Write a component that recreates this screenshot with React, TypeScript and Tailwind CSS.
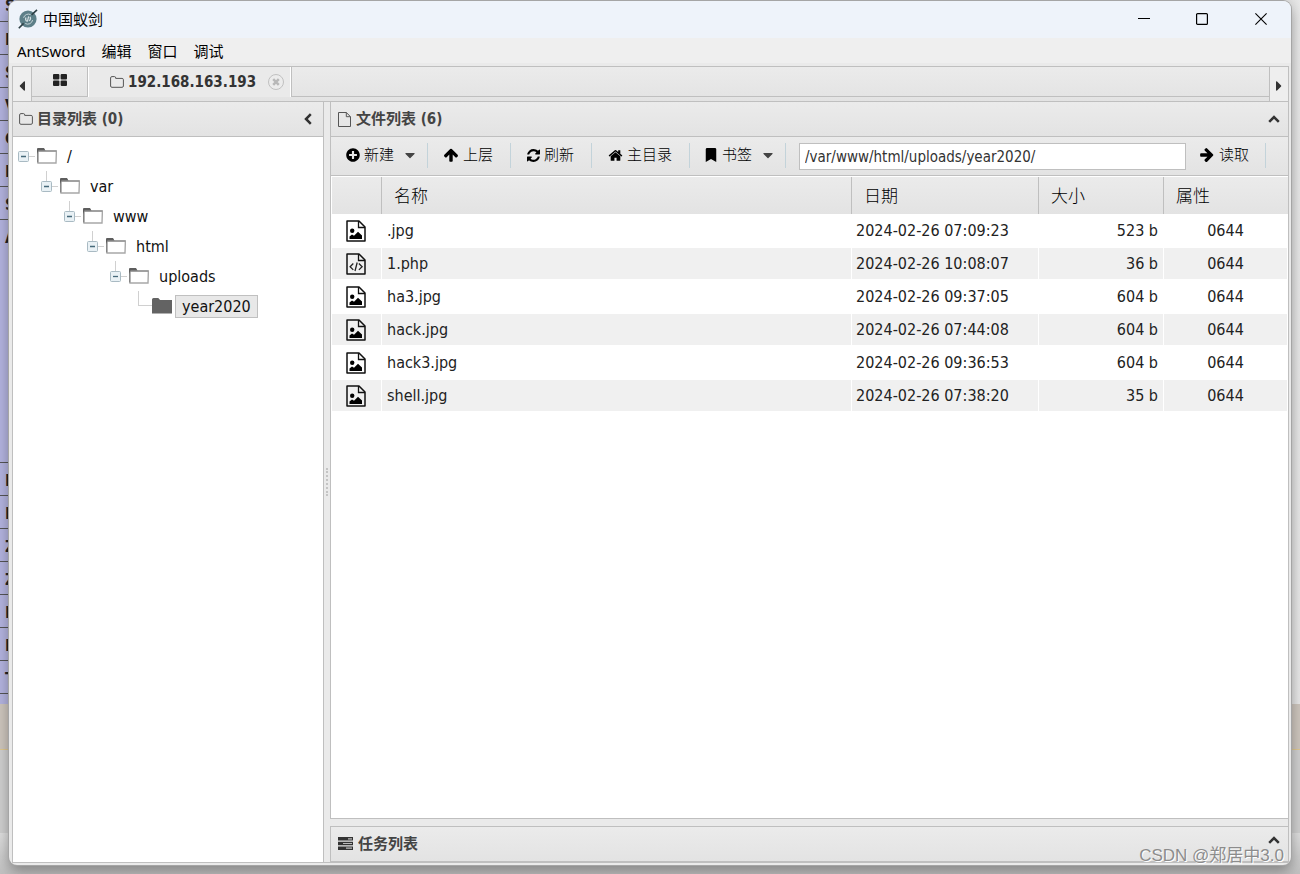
import React from "react";
import { FaPlusCircle, FaBookmark, FaCaretDown, FaCaretLeft, FaCaretRight } from "react-icons/fa";

const BAR = "bg-linear-to-b from-[#ebebeb] to-[#e3e3e3]";
const LINE = "border-[#bfbfbf]";

function Logo() {
  return (
    <svg viewBox="0 0 20 20" className="size-5" aria-hidden="true">
      <circle cx="10" cy="10" r="8.6" fill="#5d7f88" />
      <path d="M5.600 8.800A5 5 0 0 1 12.600 5.600M14.600 11A5 5 0 0 1 7.200 14.500" fill="none" stroke="#c5d3d7" strokeWidth="1" />
      <path d="M10.600 7.400L9.400 12.600M8 8.600c-.7 1.400-.4 2.800.8 3.800M12 7.900c.8 1.300.5 2.900-.8 4" fill="none" stroke="#d5e0e3" strokeWidth="1.200" />
      <path d="M19 .8L13.600 5.800M5.600 14.400L.8 19.200" stroke="#2d3f45" strokeWidth="1.600" />
    </svg>
  );
}

function ArrowIcon({ className }: { className: string }) {
  return (
    <svg viewBox="0 0 1792 1792" className={className} fill="currentColor" aria-hidden="true">
      <path d="M1675 971q0 51-37 90l-75 75q-38 38-91 38-54 0-90-38l-294-293v704q0 52-37.5 84.5t-90.5 32.5h-128q-53 0-90.5-32.5t-37.5-84.5v-704l-294 293q-36 38-90 38t-90-38l-75-75q-38-38-38-90 0-53 38-91l651-651q35-37 90-37 54 0 91 37l651 651q37 39 37 91z" />
    </svg>
  );
}

function RefreshIcon() {
  return (
    <svg viewBox="0 0 1536 1536" className="size-[13px]" fill="currentColor" aria-hidden="true">
      <path d="M1511 928q0 5-1 7-64 268-268 434.5t-478 166.500q-146 0-282.500-55t-243.500-157l-129 129q-19 19-45 19t-45-19-19-45v-448q0-26 19-45t45-19h448q26 0 45 19t19 45-19 45l-137 137q71 66 161 102t187 36q134 0 250-65t186-179q11-17 53-117 8-23 30-23h192q13 0 22.500 9.500t9.500 22.500zm25-800v448q0 26-19 45t-45 19h-448q-26 0-45-19t-19-45 19-45l138-138q-148-137-349-137-134 0-250 65t-186 179q-11 17-53 117-8 23-30 23h-199q-13 0-22.500-9.500t-9.500-22.500v-7q65-268 270-434.500t480-166.500q146 0 284 55.500t245 156.500l130-129q19-19 45-19t45 19 19 45z" />
    </svg>
  );
}

function HomeIcon() {
  return (
    <svg viewBox="0 0 1792 1792" className="size-[15px]" fill="currentColor" aria-hidden="true">
      <path d="M1472 992v480q0 26-19 45t-45 19h-384v-384h-256v384h-384q-26 0-45-19t-19-45v-480q0-1 .5-3t.5-3l575-474 575 474q1 2 1 6zm223-69l-62 74q-8 9-21 11h-3q-13 0-21-7l-692-577-692 577q-12 8-24 7-13-2-21-11l-62-74q-8-10-7-23.500t11-21.500l719-599q32-26 76-26t76 26l244 204v-195q0-14 9-23t23-9h192q14 0 23 9t9 23v408l219 182q10 8 11 21.500t-7 23.500z" />
    </svg>
  );
}

function TilesIcon() {
  return (
    <svg viewBox="0 0 14 12" className="mb-1 h-3 w-[14px]" fill="currentColor" aria-hidden="true">
      <rect width="6.4" height="5.400" rx="1" />
      <rect x="7.600" width="6.400" height="5.400" rx="1" />
      <rect y="6.600" width="6.400" height="5.400" rx="1" />
      <rect x="7.600" y="6.600" width="6.400" height="5.400" rx="1" />
    </svg>
  );
}

function FolderOutline() {
  return (
    <svg viewBox="0 0 14 12" className="h-3 w-[14px]" aria-hidden="true">
      <path d="M.6 10V1.900C.6 1.100 1.100.6 1.900.6h2.600c.8 0 1.200.5 1.200 1.300v.5h6.400c.8 0 1.300.5 1.300 1.300V10c0 .8-.5 1.300-1.300 1.300H1.900C1.100 11.300.6 10.800.6 10Z" fill="none" stroke="#555" strokeWidth="1" />
    </svg>
  );
}

function FileOutline() {
  return (
    <svg viewBox="0 0 13 15" className="h-[15px] w-[13px]" aria-hidden="true">
      <path d="M.5.5h7.800l4.200 4.200v9.800H.5ZM8.300.5v4.200h4.200" fill="none" stroke="#555" />
    </svg>
  );
}

function TreeFolder({ open }: { open: boolean }) {
  return open ? (
    <svg viewBox="0 0 20 16" className="h-4 w-5 shrink-0" aria-hidden="true">
      <path d="M1 15V3h18.400L19 15Z" fill="#fff" stroke="#a8a8a8" strokeWidth="1.400" />
      <path d="M.6 14.500V3h18.800" fill="none" stroke="#858585" strokeWidth="1.200" />
      <path d="M0 6V1Q0 0 1 0h6l1.500 2.500H1.500Z" fill="#5e5e5e" />
    </svg>
  ) : (
    <svg viewBox="0 0 20 16" className="h-4 w-5 shrink-0" aria-hidden="true">
      <path d="M0 15.500V1.500Q0 0 1.500 0h4.800l1.800 2H20v13.500Z" fill="#636363" />
    </svg>
  );
}

function Expander() {
  return (
    <svg viewBox="0 0 11 11" className="size-[11px]" aria-hidden="true">
      <rect x=".5" y=".5" width="10" height="10" rx="1" fill="#e9f1f5" stroke="#a9bac3" />
      <path d="M3 5.500h5" stroke="#46697a" strokeWidth="1.300" />
    </svg>
  );
}

function FileIcon({ kind }: { kind: "image" | "code" }) {
  return (
    <svg viewBox="0 0 20 22" className="ml-[14px] h-[22px] w-5" aria-label={kind} role="img">
      <path d="M1 1h12l6 6v14H1Z" fill="none" stroke="#111" strokeWidth="1.500" strokeLinejoin="round" />
      <path d="M12.500 1v6.500H19" fill="none" stroke="#111" strokeWidth="1.300" />
      {kind === "image" ? (
        <>
          <circle cx="6.200" cy="10.800" r="2.200" fill="#000" />
          <path d="M3.500 19v-2.500l2.500-2 2 1.300 4-4 4 3.700V19Z" fill="#000" />
        </>
      ) : (
        <path d="M7.300 10.500l-3.200 3.200 3.200 3.200M12.900 10.500l3.200 3.200-3.200 3.200M11.200 9.500l-2.200 8.500" fill="none" stroke="#222" strokeWidth="1.300" />
      )}
    </svg>
  );
}

function Chevron({ dir }: { dir: "up" | "left" }) {
  return (
    <svg viewBox="0 0 12 12" className="size-3" aria-hidden="true">
      <path d={dir === "up" ? "M1.200 8.800L6 4l4.800 4.800" : "M8.800 1.200L4 6l4.800 4.800"} fill="none" stroke="#333" strokeWidth="2.500" />
    </svg>
  );
}

function TasksIcon() {
  return (
    <svg viewBox="0 0 15 13" className="h-[13px] w-[15px]" aria-hidden="true">
      <path d="M0 0h15v3.500H0ZM0 4.700h15v3.500H0ZM0 9.400h15v3.500H0Z" fill="#333" />
      <path d="M10 1.200h4v1.200h-4ZM5 5.900h9v1.200H5ZM8 10.600h6v1.200H8Z" fill="#bbb" />
    </svg>
  );
}

const TREE = ["/", "var", "www", "html", "uploads", "year2020"];
const INDENT = ["pl-[5px]", "pl-[28px]", "pl-[51px]", "pl-[74px]", "pl-[97px]", "pl-[120px]"];

const FILES: { name: string; date: string; size: string; mode: string; kind: "image" | "code" }[] = [
  { name: ".jpg", date: "2024-02-26 07:09:23", size: "523 b", mode: "0644", kind: "image" },
  { name: "1.php", date: "2024-02-26 10:08:07", size: "36 b", mode: "0644", kind: "code" },
  { name: "ha3.jpg", date: "2024-02-26 09:37:05", size: "604 b", mode: "0644", kind: "image" },
  { name: "hack.jpg", date: "2024-02-26 07:44:08", size: "604 b", mode: "0644", kind: "image" },
  { name: "hack3.jpg", date: "2024-02-26 09:36:53", size: "604 b", mode: "0644", kind: "image" },
  { name: "shell.jpg", date: "2024-02-26 07:38:20", size: "35 b", mode: "0644", kind: "image" },
];

function Sep() {
  return <span className="h-[25px] w-px shrink-0 bg-[#c3d3da]" />;
}

function Tool({ icon, label, className, caret }: { icon: React.ReactNode; label: string; className: string; caret?: boolean }) {
  return (
    <button className={`flex shrink-0 items-center gap-1 text-[15px] leading-5 font-light text-black ${className}`}>
      {icon}
      <span>{label}</span>
      {caret && <FaCaretDown className="ml-1 size-4 text-[#444]" />}
    </button>
  );
}

function Backdrop() {
  const upper = ["I", "S", "V", "C", "I", "S"];
  const lower = ["I", "I", "Z", "Z", "I", "I", "T"];
  return (
    <div className="absolute inset-0 flex flex-col overflow-hidden bg-[#d0d0d0] text-[16px] font-bold text-[#222]" aria-hidden="true">
      <div className="flex h-[704px] shrink-0">
        <div className="flex w-[424px] flex-col bg-[#b3b3df]">
          <div className="h-[22px] shrink-0 border-b border-[#555] pl-[5px] leading-3">S</div>
          {upper.map((c, i) => (
            <div key={i} className="h-[33px] shrink-0 border-b border-[#555] pl-[5px] leading-9">{c}</div>
          ))}
          <div className="h-[243px] shrink-0 border-b border-[#555] pl-[5px] leading-9">A</div>
          {lower.map((c, i) => (
            <div key={i} className="h-[33px] shrink-0 border-b border-[#555] pl-[5px] leading-9">{c}</div>
          ))}
        </div>
        <div className="flex-1 bg-linear-to-r from-[#a6a6a6] from-90% to-[#e8e8e8]" />
      </div>
      <div className="h-[46px] shrink-0 border-b border-[#e0c890] bg-[#cdc5bd]" />
      <div className="h-[83px] shrink-0 bg-[#cfcfcf]" />
      <div className="flex-1 bg-linear-to-b from-[#dedede] to-[#c0c0c0]" />
    </div>
  );
}

export default function App() {
  return (
    <div className="relative flex h-screen min-h-[480px] flex-col overflow-hidden font-['DejaVu_Sans_Condensed','Noto_Sans','Noto_Sans_CJK_SC',sans-serif] text-[16px]">
      <Backdrop />
      <div className="relative mx-[9px] mt-px mb-[9px] flex min-h-0 flex-1 flex-col overflow-hidden rounded-lg bg-[#eaeaea] shadow-[0_0_0_1px_#a5a5a5,0_6px_14px_rgba(0,0,0,0.35)]">
        <header className="flex h-[37px] shrink-0 items-center bg-[#eef3fa] pb-[2px] pl-[9px] font-['Noto_Sans','Noto_Sans_CJK_SC',sans-serif]">
          <Logo />
          <h1 className="ml-[5px] flex-1 text-[15px] leading-5 text-black">中国蚁剑</h1>
          <div className="flex items-center">
            <button aria-label="Minimize" className="flex h-[35px] w-[58px] items-center justify-center">
              <svg viewBox="0 0 12 12" className="size-3"><path d="M0 5.500h12" stroke="#000" strokeWidth="1" /></svg>
            </button>
            <button aria-label="Maximize" className="flex h-[35px] w-[58px] items-center justify-center">
              <svg viewBox="0 0 12 12" className="size-3"><rect x=".6" y=".6" width="10.800" height="10.800" rx="1" fill="none" stroke="#000" strokeWidth="1.200" /></svg>
            </button>
            <button aria-label="Close" className="flex h-[35px] w-[60px] items-center justify-center">
              <svg viewBox="0 0 12 12" className="size-3"><path d="M.4.4l11.200 11.200M11.600.4L.4 11.600" stroke="#000" strokeWidth="1.100" /></svg>
            </button>
          </div>
        </header>

        <nav className="flex h-[25px] shrink-0 items-center gap-4 bg-[#efefef] pl-2 font-['Noto_Sans','Noto_Sans_CJK_SC',sans-serif] text-[15px] leading-5 text-black">
          <button>AntSword</button>
          <button>编辑</button>
          <button>窗口</button>
          <button>调试</button>
        </nav>

        <div className="mt-[3px] mr-[2px] mb-[2px] ml-[3px] flex min-h-0 flex-1 flex-col">
          <div className={`flex h-[35px] shrink-0 border-x border-t ${LINE} ${BAR}`}>
            <button aria-label="Scroll left" className={`flex w-[19px] shrink-0 items-center justify-center border-r bg-[#eeeeee] text-[#333] ${LINE}`}>
              <FaCaretLeft className="mt-1 size-4" />
            </button>
            <button aria-label="Home" className={`flex h-[30px] w-14 shrink-0 items-center justify-center border-r border-b text-[#222] ${LINE}`}>
              <TilesIcon />
            </button>
            <div className={`flex h-[30px] shrink-0 items-center border-x border-x-white bg-[#eaeaea] pl-[21px]`}>
              <FolderOutline />
              <span className="ml-1 text-[15px] leading-5 font-bold text-[#333]">192.168.163.193</span>
              <button aria-label="Close tab" className="mr-[6px] ml-3">
                <svg viewBox="0 0 16 16" className="size-4">
                  <circle cx="8" cy="8" r="7.500" fill="#ececec" stroke="#c0c0c0" />
                  <path d="M5.200 5.200l5.600 5.600M10.800 5.200l-5.600 5.600" stroke="#b8b8b8" strokeWidth="2.500" />
                </svg>
              </button>
            </div>
            <div className={`h-[30px] flex-1 border-b border-l ${LINE}`} />
            <button aria-label="Scroll right" className={`flex w-[19px] shrink-0 items-center justify-center border-l bg-[#eeeeee] text-[#333] ${LINE}`}>
              <FaCaretRight className="mt-1 size-4" />
            </button>
          </div>

          <main className={`flex min-h-0 flex-1 border ${LINE}`}>
            <section className={`flex w-[311px] shrink-0 flex-col border-r bg-white ${LINE}`}>
              <div className={`flex h-[35px] shrink-0 items-center border-b pr-[9px] pl-[6px] ${LINE} ${BAR}`}>
                <FolderOutline />
                <h2 className="ml-1 flex-1 text-[15px] leading-5 font-bold text-[#444]">目录列表 (0)</h2>
                <button aria-label="Collapse"><Chevron dir="left" /></button>
              </div>
              <ul className="pt-1">
                {TREE.map((name, i) => {
                  const last = i === TREE.length - 1;
                  return (
                    <li key={name} className={`flex h-[30px] items-center ${INDENT[i]}`}>
                      {last ? (
                        <span className="mb-[15px] ml-[5px] h-[15px] w-[14px] border-b border-l border-[#d0d0d0]" />
                      ) : (
                        <button aria-label={`Collapse ${name}`} className="relative flex h-[30px] w-[19px] shrink-0 items-center">
                          {i > 0 && <span className="absolute top-0 left-[5px] h-[10px] w-px bg-[#d0d0d0]" />}
                          <Expander />
                          <span className="h-px w-[6px] bg-[#d0d0d0]" />
                        </button>
                      )}
                      <TreeFolder open={!last} />
                      <span
                        className={
                          last
                            ? "ml-[3px] border border-[#c0c0c0] bg-[#e8e8e8] px-[6px] leading-[21px] text-[#111]"
                            : "ml-[10px] leading-[21px] text-[#111]"
                        }
                      >
                        {name}
                      </span>
                    </li>
                  );
                })}
              </ul>
            </section>

            <div className="flex w-[6px] shrink-0 cursor-col-resize items-center justify-center">
              <span className="h-7 border-l-2 border-dotted border-[#c4c4c4]" />
            </div>

            <div className="flex min-w-0 flex-1 flex-col">
              <section className={`flex min-h-0 flex-1 flex-col border-b border-l bg-white ${LINE}`}>
                <div className={`flex h-[35px] shrink-0 items-center border-b pr-2 pl-[7px] ${LINE} ${BAR}`}>
                  <FileOutline />
                  <h2 className="ml-[5px] flex-1 text-[15px] leading-5 font-bold text-[#444]">文件列表 (6)</h2>
                  <button aria-label="Collapse"><Chevron dir="up" /></button>
                </div>
                <div className={`flex h-[39px] shrink-0 items-center border-b pb-[2px] pl-[15px] ${LINE} ${BAR}`}>
                  <Tool icon={<FaPlusCircle className="size-[14px]" />} label="新建" className="w-[81px]" caret />
                  <Sep />
                  <Tool icon={<ArrowIcon className="size-4" />} label="上层" className="w-[82px] pl-[15px]" />
                  <Sep />
                  <Tool icon={<RefreshIcon />} label="刷新" className="w-20 pl-4" />
                  <Sep />
                  <Tool icon={<HomeIcon />} label="主目录" className="w-[97px] pl-4" />
                  <Sep />
                  <Tool icon={<FaBookmark className="size-[14px]" />} label="书签" className="w-[95px] pl-[14px]" caret />
                  <Sep />
                  <input
                    aria-label="Path"
                    defaultValue="/var/www/html/uploads/year2020/"
                    className={`mt-[3px] ml-[13px] h-[27px] min-w-0 flex-1 border bg-white px-[5px] text-[15px] text-[#333] outline-none ${LINE}`}
                  />
                  <Tool icon={<ArrowIcon className="size-4 rotate-90" />} label="读取" className="ml-[13px] w-[66px]" />
                  <Sep />
                  <span className="w-[22px] shrink-0" />
                </div>
                <div className="flex-1 overflow-auto pt-px pl-px">
                  <table className="w-full table-fixed border-separate border-spacing-0 text-[#222]">
                    <colgroup>
                      <col className="w-[50px]" />
                      <col />
                      <col className="w-[187px]" />
                      <col className="w-[125px]" />
                      <col className="w-[124px]" />
                    </colgroup>
                    <thead>
                      <tr className={`h-[37px] text-left text-[17px] leading-6 text-black ${BAR}`}>
                        <th aria-label="Type" className={`border-r font-light ${LINE}`} />
                        <th className={`border-r p-0 pl-3 font-light ${LINE}`}>名称</th>
                        <th className={`border-r p-0 pl-3 font-light ${LINE}`}>日期</th>
                        <th className={`border-r p-0 pl-3 font-light ${LINE}`}>大小</th>
                        <th className="p-0 pl-3 font-light">属性</th>
                      </tr>
                    </thead>
                    <tbody>
                      {FILES.map((f) => (
                        <tr key={f.name} className="h-[33px] leading-6 even:bg-[#f0f0f0] [&>td]:border-y [&>td]:border-r [&>td]:border-white [&>td]:p-0 [&>td]:pt-px">
                          <td><FileIcon kind={f.kind} /></td>
                          <td className="pl-[5px]!">{f.name}</td>
                          <td className="pl-1!">{f.date}</td>
                          <td className="pr-[5px]! text-right">{f.size}</td>
                          <td className="text-center">{f.mode}</td>
                        </tr>
                      ))}
                    </tbody>
                  </table>
                </div>
              </section>
              <section className={`mt-[7px] flex h-9 shrink-0 items-center border-t border-b border-l pr-2 pb-px pl-[7px] ${LINE} ${BAR}`}>
                <TasksIcon />
                <h2 className="ml-[5px] flex-1 text-[15px] leading-5 font-bold text-[#444]">任务列表</h2>
                <button aria-label="Expand" className="mb-2"><Chevron dir="up" /></button>
              </section>
            </div>
          </main>
        </div>
      </div>
      <p className="absolute right-4 bottom-2 font-['Liberation_Sans','Noto_Sans_CJK_SC',sans-serif] text-[17px] leading-5 text-[#8c8c8c] [text-shadow:1px_1px_0_#ffffff]">
        CSDN @郑居中3.0
      </p>
    </div>
  );
}
